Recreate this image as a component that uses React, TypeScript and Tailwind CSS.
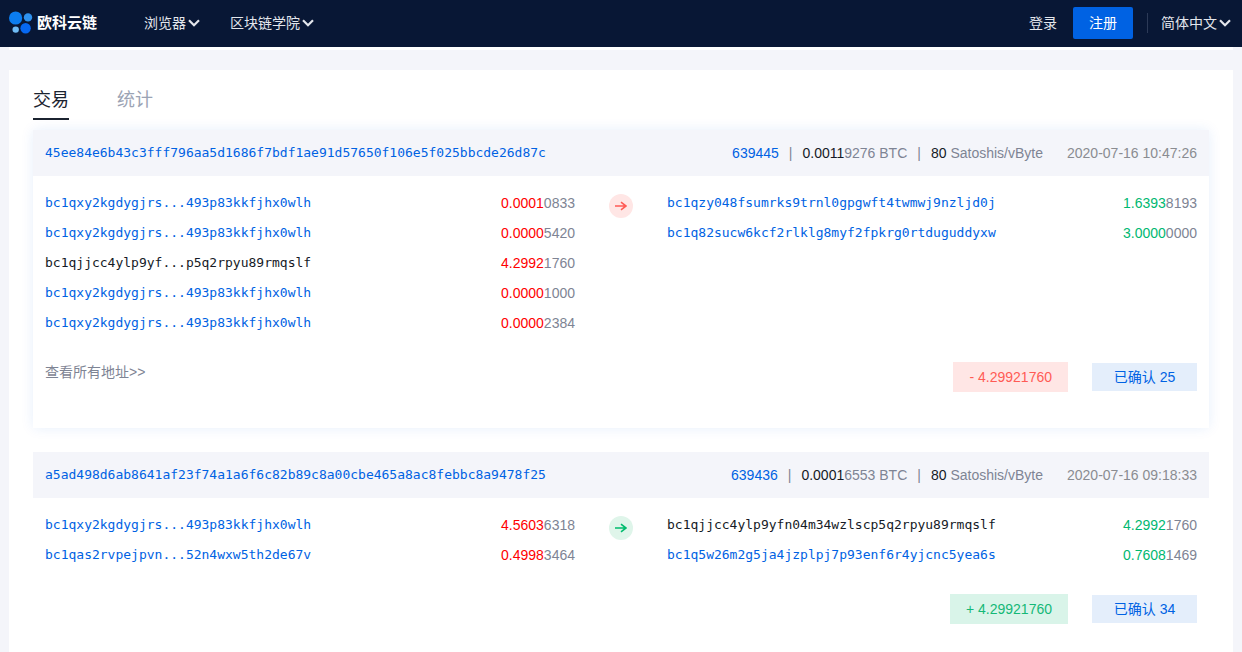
import React from 'react';
import clsx from 'clsx';

type Entry = {
  address: string;
  amount: string;
  own?: boolean;
};

type Transaction = {
  hash: string;
  block: string;
  fee: string;
  rate: number;
  time: string;
  inputs: Entry[];
  outputs: Entry[];
  direction: 'in' | 'out';
  total: string;
  confirmations: number;
  hasMore?: boolean;
  active?: boolean;
};

const transactions: Transaction[] = [
  {
    hash: '45ee84e6b43c3fff796aa5d1686f7bdf1ae91d57650f106e5f025bbcde26d87c',
    block: '639445',
    fee: '0.00119276',
    rate: 80,
    time: '2020-07-16 10:47:26',
    inputs: [
      { address: 'bc1qxy2kgdygjrs...493p83kkfjhx0wlh', amount: '0.00010833' },
      { address: 'bc1qxy2kgdygjrs...493p83kkfjhx0wlh', amount: '0.00005420' },
      { address: 'bc1qjjcc4ylp9yf...p5q2rpyu89rmqslf', amount: '4.29921760', own: true },
      { address: 'bc1qxy2kgdygjrs...493p83kkfjhx0wlh', amount: '0.00001000' },
      { address: 'bc1qxy2kgdygjrs...493p83kkfjhx0wlh', amount: '0.00002384' },
    ],
    outputs: [
      { address: 'bc1qzy048fsumrks9trnl0gpgwft4twmwj9nzljd0j', amount: '1.63938193' },
      { address: 'bc1q82sucw6kcf2rlklg8myf2fpkrg0rtduguddyxw', amount: '3.00000000' },
    ],
    direction: 'out',
    total: '4.29921760',
    confirmations: 25,
    hasMore: true,
    active: true,
  },
  {
    hash: 'a5ad498d6ab8641af23f74a1a6f6c82b89c8a00cbe465a8ac8febbc8a9478f25',
    block: '639436',
    fee: '0.00016553',
    rate: 80,
    time: '2020-07-16 09:18:33',
    inputs: [
      { address: 'bc1qxy2kgdygjrs...493p83kkfjhx0wlh', amount: '4.56036318' },
      { address: 'bc1qas2rvpejpvn...52n4wxw5th2de67v', amount: '0.49983464' },
    ],
    outputs: [
      { address: 'bc1qjjcc4ylp9yfn04m34wzlscp5q2rpyu89rmqslf', amount: '4.29921760', own: true },
      { address: 'bc1q5w26m2g5ja4jzplpj7p93enf6r4yjcnc5yea6s', amount: '0.76081469' },
    ],
    direction: 'in',
    total: '4.29921760',
    confirmations: 34,
  },
];

const Chevron = () => (
  <svg width="12" height="8" viewBox="0 0 12 8" fill="none" aria-hidden="true">
    <path d="M1 1.2 6 6.2 11 1.2" stroke="#e3e6ec" strokeWidth="2.2" />
  </svg>
);

const Arrow = () => (
  <svg width="12" height="10" viewBox="0 0 12 10" fill="none" aria-hidden="true">
    <path d="M0 5h11M6 1.2 11 5 6 8.8" stroke="currentColor" strokeWidth="1.6" />
  </svg>
);

const Logo = () => (
  <a href="#" className="flex items-center gap-1">
    <svg width="24" height="24" viewBox="0 0 24 24" aria-hidden="true">
      <circle cx="6.6" cy="7" r="6.6" fill="#0b7df0" />
      <circle cx="19" cy="6.4" r="4.2" fill="#2f92ee" />
      <circle cx="6.7" cy="18.6" r="3.2" fill="#6fbcf5" />
      <circle cx="16.6" cy="17.2" r="5.2" fill="#0668f2" />
    </svg>
    <span className="text-[15px] font-bold text-white">欧科云链</span>
  </a>
);

const Header = () => (
  <header className="flex h-[47px] items-center justify-between bg-[#081735] pr-[11px] pb-0.5 pl-[9px] text-[#e3e6ec]">
    <div className="flex items-center">
      <Logo />
      <nav className="ml-[47px] flex gap-[30px]">
        <button type="button" className="flex items-center gap-0.5">
          浏览器
          <Chevron />
        </button>
        <button type="button" className="flex items-center gap-0.5">
          区块链学院
          <Chevron />
        </button>
      </nav>
    </div>
    <div className="flex items-center">
      <a href="#">登录</a>
      <button type="button" className="ml-4 h-8 w-[60px] rounded-xs bg-[#0062e3] text-white">
        注册
      </button>
      <div className="mr-[13px] ml-[14px] h-5 w-px bg-[#2c3a57]" />
      <button type="button" className="flex items-center gap-0.5">
        简体中文
        <Chevron />
      </button>
    </div>
  </header>
);

// first four decimals are coloured, the rest stays grey
const Amount = ({ value, className }: { value: string; className: string }) => (
  <span>
    <span className={className}>{value.slice(0, 6)}</span>
    {value.slice(6)}
  </span>
);

const EntryList = ({ entries, amountClass }: { entries: Entry[]; amountClass: string }) => (
  <ul className="min-w-0 flex-1">
    {entries.map((entry, i) => (
      <li key={i} className="flex h-[30px] items-center justify-between">
        {entry.own ? (
          <span className="font-[DejaVu_Sans_Mono,monospace] text-[13px] text-[#151a26]">{entry.address}</span>
        ) : (
          <a href="#" className="font-[DejaVu_Sans_Mono,monospace] text-[13px] text-[#0062e3]">
            {entry.address}
          </a>
        )}
        <Amount value={entry.amount} className={amountClass} />
      </li>
    ))}
  </ul>
);

const TransactionCard = ({ tx }: { tx: Transaction }) => {
  const incoming = tx.direction === 'in';

  return (
    <article className={clsx('bg-white', tx.active ? 'pb-9 shadow-[0_0_12px_rgba(0,98,227,0.1)]' : 'pb-7')}>
      <div className="flex h-[46px] items-center justify-between bg-[#f4f5fa] px-3">
        <a href="#" className="font-[DejaVu_Sans_Mono,monospace] text-[13px] text-[#0062e3]">
          {tx.hash}
        </a>
        <div className="flex items-center">
          <a href="#" className="text-[#0062e3]">
            {tx.block}
          </a>
          <span className="mx-[10px]">|</span>
          <span>
            <Amount value={tx.fee} className="text-[#151a26]" /> BTC
          </span>
          <span className="mx-[10px]">|</span>
          <span>
            <span className="text-[#151a26]">{tx.rate}</span> Satoshis/vByte
          </span>
          <time className="ml-6 text-[#8a8c91]">{tx.time}</time>
        </div>
      </div>

      <div className="flex px-3 pt-3">
        <EntryList entries={tx.inputs} amountClass="text-[#ff0000]" />
        <div className="flex w-[92px] justify-center pt-1.5">
          <div
            className={clsx(
              'flex size-6 items-center justify-center rounded-full',
              incoming ? 'bg-[#dff5ea] text-[#00bc6e]' : 'bg-[#ffe6e5] text-[#ff5b55]'
            )}
          >
            <Arrow />
          </div>
        </div>
        <EntryList entries={tx.outputs} amountClass="text-[#00b871]" />
      </div>

      <div className="mt-6 flex justify-between px-3">
        <div>{tx.hasMore && <a href="#">查看所有地址&gt;&gt;</a>}</div>
        <div className="flex items-center gap-6">
          <span
            className={clsx(
              'px-4 py-[5px]',
              incoming ? 'bg-[#d9f4e9] text-[#14b877]' : 'bg-[#ffe6e5] text-[#ff5b55]'
            )}
          >
            {incoming ? '+' : '-'} {tx.total}
          </span>
          <span className="w-[105px] bg-[#e4eefb] py-1 text-center text-[#0062e3]">已确认 {tx.confirmations}</span>
        </div>
      </div>
    </article>
  );
};

export default function App() {
  return (
    <div className="flex min-h-screen flex-col bg-[#f4f5fa] font-[Liberation_Sans,Noto_Sans_CJK_SC,sans-serif] text-sm text-[#7e8494]">
      <Header />
      <div className="mx-[9px] h-[3px] bg-white" />
      <main className="mx-[9px] mt-5 flex-1 bg-white px-6 pt-3">
        <div className="flex gap-12 text-lg" role="tablist">
          <button
            type="button"
            role="tab"
            aria-selected="true"
            className="h-[38px] border-b-2 border-[#1b2330] text-[#1b2330]"
          >
            交易
          </button>
          <button type="button" role="tab" aria-selected="false" className="h-[38px] border-b-2 border-transparent text-[#9ba3b4]">
            统计
          </button>
        </div>
        <div className="mt-[10px] space-y-6">
          {transactions.map((tx) => (
            <TransactionCard key={tx.hash} tx={tx} />
          ))}
        </div>
      </main>
    </div>
  );
}
